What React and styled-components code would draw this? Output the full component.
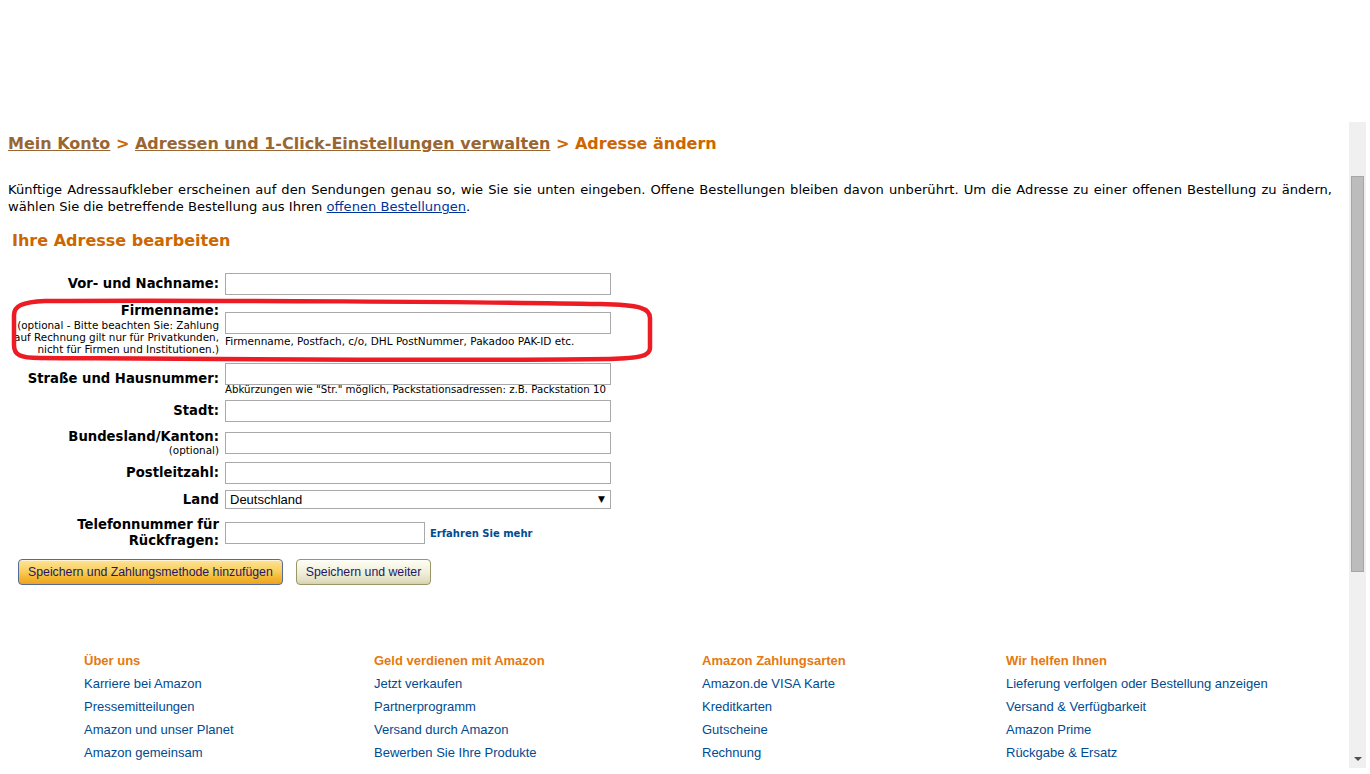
import React from 'react';
import styled, { createGlobalStyle } from 'styled-components';

const GlobalStyle = createGlobalStyle`
  html, body {
    margin: 0;
    padding: 0;
    background: #ffffff;
  }
  body {
    font-family: "DejaVu Sans", Verdana, sans-serif;
    color: #000000;
    overflow: hidden;
  }
`;

const Screen = styled.div`
  position: relative;
  width: 1370px;
  height: 774px;
  overflow: hidden;
`;

const Page = styled.div`
  padding: 134px 38px 0 8px;
`;

const Breadcrumb = styled.div`
  font-size: 16px;
  line-height: 20px;
  font-weight: bold;
  color: #cc6600;
`;

const Crumb = styled.a`
  color: #996633;
  text-decoration: underline;
`;

const Intro = styled.p`
  margin: 27px 0 0;
  font-size: 13.1px;
  line-height: 17px;
  text-align: justify;
`;

const TextLink = styled.a`
  color: #003399;
  text-decoration: underline;
`;

const Title = styled.h2`
  margin: 16px 0 0;
  padding-left: 4px;
  font-size: 16px;
  line-height: 20px;
  font-weight: bold;
  color: #cc6600;
`;

const Form = styled.form`
  margin-top: 22px;
`;

const Row = styled.div`
  display: flex;
  align-items: center;
  margin-top: ${p => p.$gap ?? 6}px;
`;

const Label = styled.div`
  width: 211px;
  flex: none;
  text-align: right;
  font-size: 13.2px;
  line-height: 16px;
  font-weight: bold;
`;

const Note = styled.div`
  font-weight: normal;
  font-size: 10.4px;
  line-height: ${p => p.$lh ?? 12}px;
`;

const Field = styled.div`
  margin-left: 6px;
  display: flex;
  flex-direction: ${p => (p.$inline ? 'row' : 'column')};
  align-items: ${p => (p.$inline ? 'center' : 'flex-start')};
`;

const TextInput = styled.input`
  display: block;
  box-sizing: border-box;
  width: ${p => p.$w ?? 386}px;
  height: 22px;
  margin: 0;
  padding: 0 3px;
  border: 1px solid #a9a9a9;
  background: #ffffff;
  font-family: "Liberation Sans", Arial, sans-serif;
  font-size: 13px;
`;

const Hint = styled.div`
  font-size: ${p => p.$fs ?? 10.5}px;
  line-height: ${p => p.$lh ?? 12}px;
  margin-top: ${p => p.$mt ?? 0}px;
`;

const SelectBox = styled.div`
  position: relative;
  width: 386px;
  height: 19px;
`;

const Select = styled.select`
  appearance: none;
  -webkit-appearance: none;
  display: block;
  box-sizing: border-box;
  width: 100%;
  height: 100%;
  margin: 0;
  padding: 0 0 0 4px;
  border: 1px solid #a9a9a9;
  border-radius: 0;
  background: #ffffff;
  font-family: "Liberation Sans", Arial, sans-serif;
  font-size: 13px;
  color: #000000;
`;

const SelectArrow = styled.span`
  position: absolute;
  right: 6px;
  top: 3px;
  font-size: 9px;
  line-height: 12px;
  color: #000000;
  pointer-events: none;
  font-family: "DejaVu Sans", sans-serif;
`;

const MoreLink = styled.a`
  margin-left: 5px;
  font-size: 10px;
  font-weight: bold;
  color: #004b91;
  text-decoration: none;
`;

const Buttons = styled.div`
  display: flex;
  gap: 13px;
  margin: 10px 0 0 10px;
`;

const Button = styled.button`
  box-sizing: border-box;
  height: 26px;
  padding: 0 9px;
  border-radius: 4px;
  font-family: "Liberation Sans", Arial, sans-serif;
  font-size: 12.3px;
  color: #1e1865;
  cursor: pointer;
  border: 1px solid ${p => (p.$primary ? '#556a96' : '#9a9668')};
  background: ${p =>
    p.$primary
      ? 'linear-gradient(to bottom, #fde49a 0%, #f9cf5c 45%, #f3b633 75%, #efa51a 100%)'
      : 'linear-gradient(to bottom, #fdfdf4 0%, #f1f0dc 50%, #e2dec2 85%, #d6d1ae 100%)'};
  box-shadow: inset 0 1px 0 rgba(255, 255, 255, 0.6);
`;

const Footer = styled.div`
  display: flex;
  margin: 64px 0 0 76px;
  font-family: "Liberation Sans", Arial, sans-serif;
  font-size: 13px;
  line-height: 23px;
`;

const FooterCol = styled.div`
  width: ${p => p.$w}px;
  flex: none;
`;

const FooterHead = styled.div`
  font-weight: bold;
  color: #e47911;
`;

const FooterLink = styled.a`
  display: block;
  color: #004b91;
  text-decoration: none;
`;

const Annotation = styled.svg`
  position: absolute;
  left: 0;
  top: 0;
  width: 1370px;
  height: 774px;
  pointer-events: none;
`;

const ScrollTrack = styled.div`
  position: absolute;
  left: 1349px;
  top: 122px;
  width: 17px;
  height: 646px;
  background: #f0f0f0;
`;

const ScrollThumb = styled.div`
  position: absolute;
  left: 2px;
  top: 54px;
  width: 13px;
  height: 396px;
  box-sizing: border-box;
  background: #bcbcbc;
  border: 1px solid #a6a6a6;
`;

const ScrollArrow = styled.div`
  position: absolute;
  left: 5px;
  bottom: 7px;
  width: 0;
  height: 0;
  border-left: 4px solid transparent;
  border-right: 4px solid transparent;
  border-top: 4px solid #505050;
`;

const footerColumns = [
  {
    w: 290,
    title: 'Über uns',
    links: ['Karriere bei Amazon', 'Pressemitteilungen', 'Amazon und unser Planet', 'Amazon gemeinsam'],
  },
  {
    w: 328,
    title: 'Geld verdienen mit Amazon',
    links: ['Jetzt verkaufen', 'Partnerprogramm', 'Versand durch Amazon', 'Bewerben Sie Ihre Produkte'],
  },
  {
    w: 304,
    title: 'Amazon Zahlungsarten',
    links: ['Amazon.de VISA Karte', 'Kreditkarten', 'Gutscheine', 'Rechnung'],
  },
  {
    w: 340,
    title: 'Wir helfen Ihnen',
    links: [
      'Lieferung verfolgen oder Bestellung anzeigen',
      'Versand & Verfügbarkeit',
      'Amazon Prime',
      'Rückgabe & Ersatz',
    ],
  },
];

export default function App() {
  return (
    <Screen>
      <GlobalStyle />
      <Page>
        <Breadcrumb>
          <Crumb>Mein Konto</Crumb> &gt; <Crumb>Adressen und 1-Click-Einstellungen verwalten</Crumb> &gt; Adresse ändern
        </Breadcrumb>

        <Intro>
          Künftige Adressaufkleber erscheinen auf den Sendungen genau so, wie Sie sie unten eingeben. Offene
          Bestellungen bleiben davon unberührt. Um die Adresse zu einer offenen Bestellung zu ändern, wählen Sie die
          betreffende Bestellung aus Ihren <TextLink>offenen Bestellungen</TextLink>.
        </Intro>

        <Title>Ihre Adresse bearbeiten</Title>

        <Form onSubmit={e => e.preventDefault()}>
          <Row $gap={0}>
            <Label>Vor- und Nachname:</Label>
            <Field>
              <TextInput />
            </Field>
          </Row>

          <Row $gap={8}>
            <Label>
              Firmenname:
              <Note>
                (optional - Bitte beachten Sie: Zahlung
                <br />
                auf Rechnung gilt nur für Privatkunden,
                <br />
                nicht für Firmen und Institutionen.)
              </Note>
            </Label>
            <Field>
              <TextInput />
              <Hint $mt={1}>Firmenname, Postfach, c/o, DHL PostNummer, Pakadoo PAK-ID etc.</Hint>
            </Field>
          </Row>

          <Row $gap={8}>
            <Label>Straße und Hausnummer:</Label>
            <Field>
              <TextInput />
              <Hint $lh={10} $fs={10.2}>
                Abkürzungen wie "Str." möglich, Packstationsadressen: z.B. Packstation 10
              </Hint>
            </Field>
          </Row>

          <Row $gap={5}>
            <Label>Stadt:</Label>
            <Field>
              <TextInput />
            </Field>
          </Row>

          <Row $gap={7}>
            <Label>
              Bundesland/Kanton:
              <Note $lh={11}>(optional)</Note>
            </Label>
            <Field>
              <TextInput />
            </Field>
          </Row>

          <Row $gap={6}>
            <Label>Postleitzahl:</Label>
            <Field>
              <TextInput />
            </Field>
          </Row>

          <Row $gap={6}>
            <Label>Land</Label>
            <Field>
              <SelectBox>
                <Select defaultValue="DE">
                  <option value="DE">Deutschland</option>
                </Select>
                <SelectArrow>▼</SelectArrow>
              </SelectBox>
            </Field>
          </Row>

          <Row $gap={8}>
            <Label>
              Telefonnummer für
              <br />
              Rückfragen:
            </Label>
            <Field $inline>
              <TextInput $w={200} />
              <MoreLink>Erfahren Sie mehr</MoreLink>
            </Field>
          </Row>

          <Buttons>
            <Button type="button" $primary>
              Speichern und Zahlungsmethode hinzufügen
            </Button>
            <Button type="button">Speichern und weiter</Button>
          </Buttons>
        </Form>

        <Footer>
          {footerColumns.map(col => (
            <FooterCol key={col.title} $w={col.w}>
              <FooterHead>{col.title}</FooterHead>
              {col.links.map(link => (
                <FooterLink key={link}>{link}</FooterLink>
              ))}
            </FooterCol>
          ))}
        </Footer>
      </Page>

      <Annotation viewBox="0 0 1370 774">
        <path
          d="M 45 301 C 200 300, 500 302, 600 304 C 640 305, 650 308, 650 318 L 650 348 C 650 356, 640 358, 610 359 C 450 361, 200 359, 40 358 C 20 358, 14 355, 14 345 L 14 315 C 14 306, 22 302, 45 301 Z"
          fill="none"
          stroke="#ed1c24"
          strokeWidth="4.5"
        />
      </Annotation>

      <ScrollTrack>
        <ScrollThumb />
        <ScrollArrow />
      </ScrollTrack>
    </Screen>
  );
}
